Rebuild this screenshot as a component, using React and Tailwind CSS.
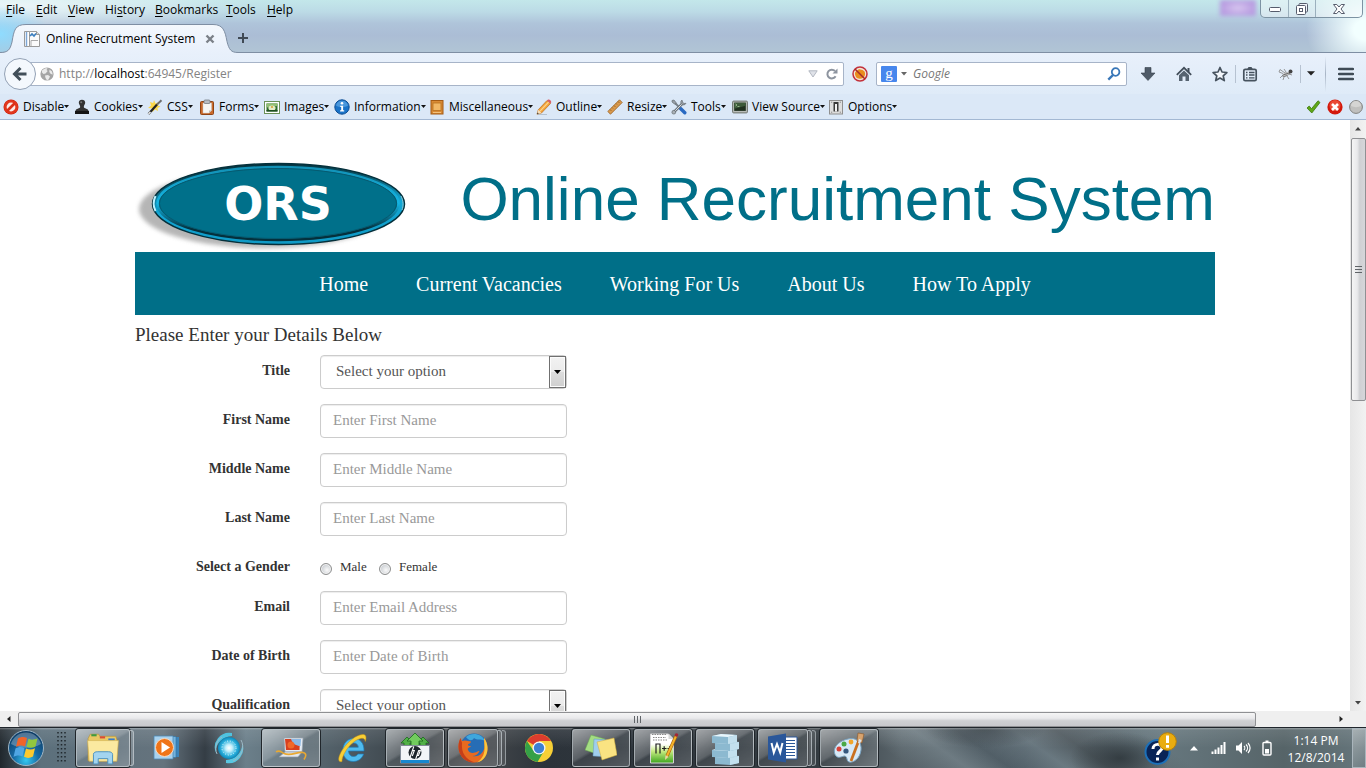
import React from "react";

/* ---------- toolbar icons ---------- */

function Svg({ s = 16, vb = 16, children }) {
  return (
    <svg className="block shrink-0" width={s} height={s} viewBox={`0 0 ${vb} ${vb}`} fill="none" aria-hidden="true">
      {children}
    </svg>
  );
}

const IconDisable = () => (
  <Svg>
    <circle cx="8" cy="8" r="7.500" fill="#c9200c" />
    <circle cx="8" cy="8" r="7" fill="#e2371d" />
    <circle cx="8" cy="8" r="4.400" fill="#fbeae6" />
    <path d="M4 12 12 4" stroke="#dd3017" strokeWidth="2.600" />
  </Svg>
);
const IconCookies = () => (
  <Svg>
    <path d="M8 .8c2 0 3.200 1.300 3.200 3 0 1.600-1.400 2.400-1.400 4.200 0 1.600 4.700 1.600 4.700 4H1.500c0-2.400 4.700-2.400 4.700-4 0-1.800-1.400-2.600-1.400-4.200 0-1.700 1.200-3 3.200-3z" fill="#333" />
    <path d="M1 12h14v3H1z" fill="#151515" />
    <circle cx="7.200" cy="3.200" r="1" fill="#777" />
  </Svg>
);
const IconCss = () => (
  <Svg>
    <path d="m7 1 1.500 3.500L12 3l-1 3.500 2.500 1L10.500 9l.5 3-3-1.500L5.500 13 5 9.500 1 9l3-2.500L3 3l3.200 1z" fill="#fbd84a" />
    <path d="M1.500 15 10 5.500" stroke="#222" strokeWidth="2.200" />
    <path d="m10 5.500 4.500-4.300" stroke="#6d6d6d" strokeWidth="2" />
    <path d="m1.500 15 2-2.200" stroke="#ddd" strokeWidth="1.800" />
  </Svg>
);
const IconForms = () => (
  <Svg>
    <rect x="1.500" y="2.500" width="13" height="13" rx="1" fill="#c96a2c" stroke="#8f4416" />
    <path d="M4 4h8.500v7.500L10 14H4z" fill="#f7f7f5" stroke="#c9c9c9" strokeWidth=".5" />
    <path d="M12.500 11.500H10V14z" fill="#bdbdbd" />
    <rect x="5" y="1" width="6" height="3.500" rx="1" fill="#b9bec4" stroke="#6c7177" strokeWidth=".7" />
  </Svg>
);
const IconImages = () => (
  <Svg>
    <rect x=".5" y="2.500" width="15" height="12" fill="#fff" stroke="#6b9158" />
    <rect x="2.500" y="4.500" width="11" height="8" fill="#2f6d2c" />
    <path d="M2.500 4.500h11v2.500l-11 1.500z" fill="#92bf74" />
    <ellipse cx="8" cy="9" rx="3.600" ry="2.500" fill="#e4ecc8" />
    <circle cx="8" cy="8" r="1.100" fill="#d6a335" />
    <path d="M2.500 11h11v1.500h-11z" fill="#1f4f20" />
  </Svg>
);
const IconInfo = () => (
  <Svg>
    <circle cx="8" cy="8" r="7.200" fill="#1a73c8" stroke="#0d4d93" />
    <path d="M2 6.500a6.200 6.200 0 0 1 12 0c-3 2-9 2-12 0z" fill="#4a97dc" />
    <circle cx="8" cy="4.200" r="1.300" fill="#fff" />
    <path d="M6.300 6.800h2.800v4.400h1.100v1.300H6.100v-1.300h1.100V8H6.300z" fill="#fff" />
  </Svg>
);
const IconMisc = () => (
  <Svg>
    <rect x="2" y="1.500" width="12" height="13.500" fill="#d98b35" stroke="#a45b14" />
    <rect x="4" y="4" width="8" height="7.500" fill="#f1b765" stroke="#b8701f" strokeWidth=".8" />
    <path d="M4 13.500h8" stroke="#f3c27c" />
  </Svg>
);
const IconPencil = () => (
  <Svg>
    <path d="m1 15.200 1.300-4.500L11 1.500l3.500 3L5.500 14z" fill="#f3a33a" stroke="#b96a18" strokeWidth=".7" />
    <path d="m4 12.200 8.700-9.200" stroke="#fcd48b" strokeWidth="1.200" />
    <path d="m11 1.500 1-.9c1.500-.6 3.600 1.200 3.200 2.800l-.9 1z" fill="#d9606a" />
    <path d="m1 15.200 1.300-4.500 3.200 3.300z" fill="#f5dfbd" />
    <path d="m1 15.200.6-1.800 1.200 1.200z" fill="#222" />
    <path d="M2 15.500h9" stroke="#9aa7b5" strokeWidth=".6" />
  </Svg>
);
const IconRuler = () => (
  <Svg>
    <path d="M.8 12.500 12.500.8l2.700 2.700L3.500 15.200z" fill="#d99a4e" stroke="#995f1f" strokeWidth=".8" />
    <path d="m3 10.500 1.400 1.400M5 8.500l1 1M7 6.500l1.400 1.400M9 4.500l1 1M11 2.500l1.400 1.400" stroke="#8a5a1c" strokeWidth=".8" />
  </Svg>
);
const IconTools = () => (
  <Svg>
    <path d="m4 4 6 6" stroke="#7a828a" strokeWidth="2" />
    <path d="m9.500 9.500 4.300 4.300" stroke="#2a6ac2" strokeWidth="3.400" strokeLinecap="round" />
    <path d="m2 14 10-10" stroke="#6f767d" strokeWidth="2.600" />
    <path d="m2 14 10-10" stroke="#d8dde1" strokeWidth="1" />
    <path d="M11 1c-1.600 1-1.600 3.200-.3 4.300 1.300 1 3.500.8 4.300-1l-2.200.2L11.600 3zM1 1.500 3 1l2 2.500-.2 1.600-1.500-.2L1 3z" fill="#9aa1a8" stroke="#5b6167" strokeWidth=".6" />
    <circle cx="2.800" cy="13.200" r="1.900" fill="#aab1b7" stroke="#5b6167" strokeWidth=".6" />
  </Svg>
);
const IconTerminal = () => (
  <Svg>
    <rect x=".6" y="2.100" width="14.800" height="11.800" rx="1" fill="#b9bdb9" stroke="#6d736d" />
    <rect x="2.200" y="3.700" width="11.600" height="8.200" fill="#20301f" />
    <path d="M2.200 3.700h11.600v3l-11.600 3z" fill="#3d5a3a" />
    <path d="m3.500 5 1.500 1-1.500 1M5.500 7.500h2" stroke="#b8dca8" strokeWidth=".7" />
  </Svg>
);
const IconOptions = () => (
  <Svg>
    <rect x="1.500" y="1.500" width="13" height="13.500" fill="#dedede" stroke="#8f8f8f" />
    <path d="M5.500 3h5v9.500h-5z" fill="#3a3a3a" />
    <path d="M7 5h2v7.500H7z" fill="#f3f3f3" />
    <path d="M3.200 13.200h1M11.800 13.200h1M3.200 3.200h1M11.800 3.200h1" stroke="#777" />
  </Svg>
);

const devItems = [
  { label: "Disable", w: "w-[71px]", icon: <IconDisable /> },
  { label: "Cookies", w: "w-[73px]", icon: <IconCookies /> },
  { label: "CSS", w: "w-[52px]", icon: <IconCss /> },
  { label: "Forms", w: "w-[65px]", icon: <IconForms /> },
  { label: "Images", w: "w-[70px]", icon: <IconImages /> },
  { label: "Information", w: "w-[95px]", icon: <IconInfo /> },
  { label: "Miscellaneous", w: "w-[107px]", icon: <IconMisc /> },
  { label: "Outline", w: "w-[71px]", icon: <IconPencil /> },
  { label: "Resize", w: "w-[64px]", icon: <IconRuler /> },
  { label: "Tools", w: "w-[61px]", icon: <IconTools /> },
  { label: "View Source", w: "w-[96px]", icon: <IconTerminal /> },
  { label: "Options", w: "w-[70px]", icon: <IconOptions /> },
];

const menus = [
  ["F", "ile", "w-[30px]", ""],
  ["E", "dit", "w-[32px]", ""],
  ["V", "iew", "w-[37px]", ""],
  ["s", "tory", "w-[50px]", "Hi"],
  ["B", "ookmarks", "w-[71px]", ""],
  ["T", "ools", "w-[41px]", ""],
  ["H", "elp", "w-[40px]", ""],
];

/* ---------- browser chrome ---------- */

function TitleArea() {
  return (
    <div className="relative bg-[radial-gradient(ellipse_50px_30px_at_0px_34px,#8fdcff_0%,transparent_100%),radial-gradient(ellipse_240px_26px_at_10px_6px,#ffffffb0_0%,transparent_100%),radial-gradient(ellipse_60px_50px_at_100%_30px,#f2ffff_20%,transparent_100%),linear-gradient(180deg,#c3e7ea_0%,#bcdbe6_22%,#afc4da_44%,#abbdd5_66%,#b1c5d5_100%)]">
      <div className="flex h-6 items-start justify-between">
        <nav className="flex h-5 items-center pl-[6px] text-[12px] leading-5 text-black">
          {menus.map(([key, rest, w, pre]) => (
            <button key={key + rest} className={`${w} h-5 whitespace-nowrap text-left`}>
              {pre}
              <span className="underline underline-offset-2">{key}</span>
              {rest}
            </button>
          ))}
        </nav>
        <div className="flex pr-[3px]">
          <div className="mr-1 h-[16px] w-[36px] bg-[#b79fe0] bg-[radial-gradient(ellipse_at_center,#d8c8f0_0%,#b79be0_70%)] blur-[2px]" />
          <div className="flex h-[18px] overflow-hidden rounded-b-[5px] border border-t-0 border-[#7d93a3] bg-[#ffffff70]">
            <button aria-label="Minimize" className="flex w-[28px] items-center justify-center border-r border-[#9bb0bd]">
              <svg width="14" height="8" viewBox="0 0 14 8" aria-hidden="true"><rect x="1.500" y="2.500" width="11" height="4" rx="1" fill="#fff" stroke="#565c6c" /></svg>
            </button>
            <button aria-label="Restore" className="flex w-[27px] items-center justify-center border-r border-[#9bb0bd]">
              <svg width="14" height="14" viewBox="0 0 14 14" aria-hidden="true">
                <rect x="4" y="1.500" width="8.500" height="8.500" rx="1" fill="#eef3f8" stroke="#565c6c" />
                <rect x="1.500" y="3.500" width="9" height="9" rx="1" fill="#fff" stroke="#565c6c" />
                <rect x="4.500" y="6.500" width="3" height="3" fill="#fff" stroke="#565c6c" />
              </svg>
            </button>
            <button aria-label="Close window" className="flex w-[46px] items-center justify-center">
              <svg width="14" height="12" viewBox="0 0 14 12" aria-hidden="true">
                <path d="M1.500 1.500h3.300L7 4l2.200-2.500h3.300L9 6l3.500 4.500H9.200L7 8l-2.200 2.500H1.500L5 6z" fill="#fff" stroke="#565c6c" strokeLinejoin="round" />
              </svg>
            </button>
          </div>
        </div>
      </div>
      <div className="flex h-[29px] items-center border-b border-[#7e8ea3]">
        <div className="relative -mb-px h-[29px] w-[240px]">
          <svg className="absolute inset-0" width="240" height="29" viewBox="0 0 240 29" aria-hidden="true">
            <defs>
              <linearGradient id="tab" x1="0" y1="0" x2="0" y2="1">
                <stop offset="0" stopColor="#f4f8fd" />
                <stop offset="1" stopColor="#e8f0fb" />
              </linearGradient>
            </defs>
            <path d="M0 29v-.5C8 28.500 10 26 12 18 14 6 15 .5 26 .5h187c10 0 12 6 14 17 2 8 4 11 11 11h2v.5z" fill="url(#tab)" />
            <path d="M0 28.500C8 28.500 10 26 12 18 14 6 15 .5 26 .5h187c10 0 12 6 14 17 2 8 4 11 11 11h2" fill="none" stroke="#7e8ea3" />
          </svg>
          <div className="relative flex h-[29px] items-center pl-6">
            <svg width="17" height="16" viewBox="0 0 17 16" aria-hidden="true">
              <path d="M.5.5h5v15h-5z" fill="#fff" stroke="#9a9a9a" />
              <path d="M2.500 1v14" stroke="#7da7d6" strokeWidth="1.500" />
              <path d="M5.500.5h7l3 3v12h-10z" fill="#fbfbfb" stroke="#9a9a9a" />
              <path d="M12.500.5v3h3" fill="#ddd" stroke="#9a9a9a" />
              <path d="m6 5 2-2 2 2 2-2.500" stroke="#3b7fc0" strokeWidth="1.600" fill="none" />
              <path d="M7 9.500h7M7 15V9.500" stroke="#aaa" fill="none" />
            </svg>
            <span className="w-[156px] whitespace-nowrap pl-[5px] text-[12px] leading-5 text-black">Online Recrutment System</span>
            <button aria-label="Close tab" className="ml-2">
              <svg width="10" height="10" viewBox="0 0 10 10" aria-hidden="true"><path d="m1.500 1.500 7 7M8.500 1.500l-7 7" stroke="#7b8088" strokeWidth="2.400" /></svg>
            </button>
          </div>
        </div>
        <button aria-label="New tab" className="-ml-[3px]">
          <svg width="12" height="12" viewBox="0 0 12 12" aria-hidden="true"><path d="M6 1v10M1 6h10" stroke="#3f4954" strokeWidth="2" /></svg>
        </button>
      </div>
    </div>
  );
}

function NavBar() {
  return (
    <div className="flex h-[41px] items-center bg-[linear-gradient(180deg,#e8f0fb,#dfebf8)] text-[12px]">
      <div className="flex min-w-0 flex-1 items-center pl-1">
        <button aria-label="Back" className="relative z-10 flex size-8 shrink-0 items-center justify-center rounded-full border border-[#93a1b5] bg-[#f4f8fd]">
          <svg width="16" height="16" viewBox="0 0 16 16" aria-hidden="true">
            <path d="M8.500 2 2.500 8l6 6M3 8h11.500" stroke="#424f5a" strokeWidth="3" fill="none" />
          </svg>
        </button>
        <div className="-ml-[6px] flex h-6 min-w-0 flex-1 items-center rounded-r-[2px] border border-[#a7b4c8] bg-white pl-[9px] pr-[5px]">
          <svg width="14" height="14" viewBox="0 0 14 14" aria-hidden="true">
            <circle cx="7" cy="7" r="6.600" fill="#a5a5a5" />
            <path d="M2 3.500C4 1.500 6 1 7.500 1.200L6.500 3l1.200 1L5.500 6.500l-2 .5L2 5.500zM5 8.500l3-.5 2 1.500-1.500 3-1.500.8L5.500 11zM9.500 2.500l2.500 2 .8 3-2-.5-1.500-2z" fill="#eaeaea" />
          </svg>
          <p className="min-w-0 flex-1 truncate pl-[5px] text-[#838383]">
            http://<span className="text-black">localhost</span>:64945/Register
          </p>
          <button aria-label="Show history" className="mr-2">
            <svg width="10" height="8" viewBox="0 0 10 8" aria-hidden="true"><path d="M.8.8h8.400L5 7z" fill="#dfe2e8" stroke="#b3b8c2" /></svg>
          </button>
          <button aria-label="Reload">
            <svg width="12" height="12" viewBox="0 0 12 12" aria-hidden="true">
              <path d="M9.600 8.300A4.400 4.400 0 1 1 9 3" fill="none" stroke="#8d949f" strokeWidth="2" />
              <path d="M11.500.5v5H6.500z" fill="#8d949f" />
            </svg>
          </button>
        </div>
      </div>
      <button aria-label="Add-on blocker" className="mx-2">
        <Svg>
          <circle cx="8" cy="8" r="6.500" fill="#f3e3d6" />
          <path d="M3 7c1-3 3-2 4-4 1 1 3 0 5 2s1 6-1 7-6 1-7-1-1-2-1-4z" fill="#e98d1d" />
          <circle cx="8" cy="8" r="7" stroke="#c3303a" strokeWidth="1.500" />
          <path d="m3 3 10 10" stroke="#a82b2b" strokeWidth="1.500" />
        </Svg>
      </button>
      <div className="flex h-6 w-[251px] items-center rounded-[2px] border border-[#a7b4c8] bg-white pl-1 pr-[5px]">
        <svg className="shrink-0" width="16" height="16" viewBox="0 0 16 16" aria-hidden="true">
          <rect width="16" height="16" rx="1" fill="#4787ed" />
          <text x="8" y="11.500" textAnchor="middle" fontFamily="Liberation Serif, serif" fontSize="15" fill="#fff">g</text>
        </svg>
        <svg className="ml-1 shrink-0" width="6" height="4" viewBox="0 0 6 4" aria-hidden="true"><path d="M0 0h6L3 3.500z" fill="#666" /></svg>
        <input aria-label="Search" placeholder="Google" className="ml-[6px] min-w-0 flex-1 bg-transparent italic outline-none placeholder:text-[#777]" />
        <button aria-label="Go">
          <svg width="14" height="14" viewBox="0 0 14 14" aria-hidden="true">
            <circle cx="8.600" cy="5" r="3.800" fill="none" stroke="#3977b8" strokeWidth="1.800" />
            <path d="m6 8-4.700 4.700" stroke="#3977b8" strokeWidth="2.400" />
          </svg>
        </button>
      </div>
      <div className="flex h-[40px] items-center pl-[13px]">
        <button aria-label="Downloads" className="mr-5">
          <Svg><path d="M5 1.500h6V7h4l-7 7.500L1 7h4z" fill="#4f5b68" stroke="#36414c" strokeWidth=".6" /></Svg>
        </button>
        <button aria-label="Home" className="mr-5">
          <Svg>
            <path d="m.8 8.800 7.200-7 7.200 7" stroke="#424e5a" strokeWidth="1.800" />
            <path d="M11.500 2h2v4h-2z" fill="#424e5a" />
            <path d="M8 4.500 13 9.300V15H9.500v-4.500h-3V15H3V9.300z" fill="#566370" />
          </Svg>
        </button>
        <button aria-label="Bookmark this page" className="mr-[7px]">
          <Svg><path d="m8 1.500 2 4.500 4.900.5-3.700 3.300 1.100 4.800L8 12.100l-4.300 2.500 1.100-4.800L1.100 6.500 6 6z" stroke="#46525e" strokeWidth="1.700" strokeLinejoin="round" fill="#f2f6fb" /></Svg>
        </button>
        <span className="h-[18px] w-px bg-[#b6c2d1]" />
        <button aria-label="Bookmarks list" className="ml-[6px] mr-5">
          <Svg>
            <rect x="1.800" y="3.300" width="12.400" height="11.400" rx="1.500" stroke="#46525e" strokeWidth="1.700" />
            <path d="M5 3.500 6.500 1h3L11 3.500z" fill="#46525e" />
            <path d="M4 6.500h1.500M7 6.500h5.500M4 9h1.500M7 9h5.500M4 11.800h1.500M7 11.800h5.500" stroke="#46525e" strokeWidth="1.300" />
          </Svg>
        </button>
        <button aria-label="Firebug" className="mr-[6px]">
          <Svg>
            <path d="M4 9.500c2-3 5-4 7.500-3.500l.5 2c-2 1.500-4 3-7 3z" fill="#707070" />
            <path d="m7 7-5-3.500L1 6l4 1.500M8 6 6 3M11 8l3 1M9 10l2 3M6 11l-1 3M4 10l-2 2" stroke="#8d8d8d" strokeWidth=".9" />
            <circle cx="12.500" cy="5.500" r="2" fill="#444" />
            <path d="m5 8 6-2M5 10l6-2" stroke="#ddd" strokeWidth=".7" />
          </Svg>
        </button>
        <span className="h-[18px] w-px bg-[#b6c2d1]" />
        <button aria-label="More" className="mx-[6px]">
          <svg width="8" height="5" viewBox="0 0 8 5" aria-hidden="true"><path d="M0 .3h8L4 4.500z" fill="#222" /></svg>
        </button>
        <span className="ml-[4px] h-[36px] w-px bg-[linear-gradient(180deg,transparent,#a7b4c5,transparent)]" />
        <button aria-label="Open menu" className="mx-3">
          <Svg><path d="M1 3h14M1 8h14M1 13h14" stroke="#3f4b56" strokeWidth="2.400" strokeLinecap="round" /></Svg>
        </button>
      </div>
    </div>
  );
}

function DevToolbar() {
  return (
    <div className="flex h-[26px] items-center border-b border-[#a3b8d3] bg-[#dbe8f7] pl-[3px] pr-[3px] text-[12px] text-black">
      {devItems.map((it) => (
        <button key={it.label} className={`${it.w} flex shrink-0 items-center gap-1 whitespace-nowrap`}>
          {it.icon}
          <span className="flex items-center">
            {it.label}
            <svg width="5" height="3" viewBox="0 0 5 3" aria-hidden="true"><path d="M0 0h5L2.500 3z" fill="#111" /></svg>
          </span>
        </button>
      ))}
      <div className="ml-auto flex items-center gap-[6px]">
        <Svg>
          <path d="m2 9 2.200-2 2.300 2.700L13 1.800 15 3.500 6.800 14z" fill="#5fa718" stroke="#3c7a0b" strokeWidth=".8" />
        </Svg>
        <Svg>
          <circle cx="8" cy="8" r="7.600" fill="#d3180b" />
          <circle cx="8" cy="6.500" r="5.500" fill="#ea4a35" />
          <path d="m5 5 6 6M11 5l-6 6" stroke="#fff" strokeWidth="2.600" />
        </Svg>
        <svg width="14" height="14" viewBox="0 0 14 14" aria-hidden="true">
          <circle cx="7" cy="7" r="6.400" fill="#c0c0be" stroke="#80807e" />
          <path d="M2 6a5 5 0 0 1 10 0c-3 1.500-7 1.500-10 0z" fill="#d5d5d3" />
        </svg>
      </div>
    </div>
  );
}

/* ---------- page content ---------- */

function OrsLogo() {
  return (
    <svg width="272" height="92" viewBox="0 0 272 92" role="img" aria-label="ORS">
      <defs>
        <filter id="soft" x="-10%" y="-10%" width="120%" height="120%"><feGaussianBlur stdDeviation="2" /></filter>
        <linearGradient id="rim" x1="0" y1="0" x2=".15" y2="1">
          <stop offset="0" stopColor="#03262f" />
          <stop offset=".3" stopColor="#0a5b70" />
          <stop offset=".6" stopColor="#12a8d6" />
          <stop offset="1" stopColor="#0f9ac6" />
        </linearGradient>
        <linearGradient id="rim2" x1="0" y1="0" x2="0" y2="1">
          <stop offset="0" stopColor="#1291b6" />
          <stop offset=".5" stopColor="#14b4e2" />
          <stop offset=".85" stopColor="#04303c" />
        </linearGradient>
      </defs>
      <ellipse cx="130" cy="49" rx="126" ry="39" fill="#9d9d9d" opacity=".75" filter="url(#soft)" />
      <ellipse cx="143.500" cy="44" rx="126" ry="40.500" fill="url(#rim)" stroke="#05303b" strokeWidth="1.500" />
      <ellipse cx="143" cy="43.500" rx="120.500" ry="36.500" fill="#00708a" stroke="url(#rim2)" strokeWidth="2.500" />
      <ellipse cx="143" cy="43.500" rx="118.500" ry="35" fill="#00708a" stroke="#065a70" strokeWidth="1" />
      <path d="M20.500 36c-2.500 5-2.500 10 0 15" stroke="#bff2ff" strokeWidth="2" fill="none" />
      <path d="M266 36c2.500 5 2.500 10 1 14" stroke="#8cc4d2" strokeWidth="1" fill="none" />
      <text x="143" y="60" textAnchor="middle" fill="#fff" fontFamily="DejaVu Sans, sans-serif" fontWeight="700" fontSize="46">ORS</text>
    </svg>
  );
}

const fieldBox =
  "h-[34px] w-full rounded border border-[#ccc] bg-white pb-[2px] text-[15px] text-[#555] shadow-[inset_0_1px_1px_rgba(0,0,0,0.075)] outline-none";

function Row({ id, label, children }) {
  return (
    <div className="flex gap-[30px]">
      <label htmlFor={id} className="w-[155px] pt-[6px] text-right text-[14px] font-bold leading-5">{label}</label>
      <div className="w-[247px]">{children}</div>
    </div>
  );
}

function TextField({ id, label, placeholder }) {
  return (
    <Row id={id} label={label}>
      <input id={id} type="text" placeholder={placeholder} className={`${fieldBox} px-3 placeholder:text-[#999]`} />
    </Row>
  );
}

function SelectField({ id, label }) {
  return (
    <Row id={id} label={label}>
      <div className="relative">
        <select id={id} className={`${fieldBox} appearance-none pl-[15px] pr-6`}>
          <option>Select your option</option>
        </select>
        <span className="pointer-events-none absolute right-px top-px flex h-8 w-[17px] items-center justify-center border border-[#707070] bg-[linear-gradient(180deg,#f2f2f2_0%,#ebebeb_50%,#dddddd_50%,#cfcfcf_100%)] shadow-[inset_0_0_0_1px_#fcfcfc]">
          <svg width="7" height="4" viewBox="0 0 7 4" aria-hidden="true"><path d="M0 0h7L3.500 4z" fill="#000" /></svg>
        </span>
      </div>
    </Row>
  );
}

const radio =
  "mt-1 size-3 appearance-none rounded-full border border-[#8e8f8f] bg-[radial-gradient(circle_at_60%_60%,#fafafa_0%,#c9cdd2_70%)] shadow-[inset_0_0_0_1px_#f4f4f4]";

function Page() {
  return (
    <main className="min-w-0 flex-1 overflow-hidden bg-white font-['Liberation_Serif',serif] text-[#333]">
      <div className="mx-auto w-4/5">
        <header className="flex h-[132px] items-start justify-between pt-10">
          <OrsLogo />
          <h1 className="whitespace-nowrap pt-1 font-['Liberation_Sans',sans-serif] text-[62px] leading-[70px] text-[#006f88]">
            Online Recruitment System
          </h1>
        </header>
        <nav className="flex h-[63px] items-center justify-center gap-12 bg-[#006f88] text-[20px] text-white">
          <a href="#home">Home</a>
          <a href="#vacancies">Current Vacancies</a>
          <a href="#working">Working For Us</a>
          <a href="#about">About Us</a>
          <a href="#apply">How To Apply</a>
        </nav>
        <h2 className="pb-2 pt-2 text-[19px] leading-6">Please Enter your Details Below</h2>
        <form className="flex flex-col gap-[15px]">
          <SelectField id="title" label="Title" />
          <TextField id="first" label="First Name" placeholder="Enter First Name" />
          <TextField id="middle" label="Middle Name" placeholder="Enter Middle Name" />
          <TextField id="last" label="Last Name" placeholder="Enter Last Name" />
          <fieldset className="flex h-[25px] items-center gap-[30px]">
            <legend className="float-left w-[155px] pt-[6px] text-right text-[14px] font-bold leading-5">Select a Gender</legend>
            <div className="flex pt-[6px] text-[13px] leading-5">
              <span className="flex w-[59px] items-center gap-2">
                <input id="male" name="gender" type="radio" className={radio} />
                <label htmlFor="male">Male</label>
              </span>
              <span className="flex items-center gap-2">
                <input id="female" name="gender" type="radio" className={radio} />
                <label htmlFor="female">Female</label>
              </span>
            </div>
          </fieldset>
          <TextField id="email" label="Email" placeholder="Enter Email Address" />
          <TextField id="dob" label="Date of Birth" placeholder="Enter Date of Birth" />
          <SelectField id="qualification" label="Qualification" />
        </form>
      </div>
    </main>
  );
}

function VerticalScroll() {
  return (
    <div className="flex w-4 shrink-0 flex-col items-center bg-[linear-gradient(90deg,#e6e6e6,#f2f2f2)]">
      <div className="flex h-[18px] items-center">
        <svg width="6" height="4" viewBox="0 0 6 4" aria-hidden="true"><path d="M3 0 6 3.500H0z" fill="#444" /></svg>
      </div>
      <div className="flex h-[263px] w-[15px] items-center justify-center rounded-[2px] border border-[#8f9093] bg-[linear-gradient(90deg,#f5f5f5_0%,#e9e9eb_40%,#cfd0d3_60%,#d6d6da_100%)]">
        <svg width="7" height="9" viewBox="0 0 7 9" aria-hidden="true"><path d="M0 1.500h7M0 4.500h7M0 7.500h7" stroke="#606468" /></svg>
      </div>
      <div className="mt-auto flex h-4 items-center">
        <svg width="6" height="4" viewBox="0 0 6 4" aria-hidden="true"><path d="M0 0h6L3 3.500z" fill="#444" /></svg>
      </div>
    </div>
  );
}

function HorizontalScroll() {
  return (
    <div className="flex h-4 shrink-0 items-center bg-[#efefef] pr-4">
      <div className="flex w-[18px] justify-center">
        <svg width="4" height="6" viewBox="0 0 4 6" aria-hidden="true"><path d="M3.500 0v6L0 3z" fill="#222" /></svg>
      </div>
      <div className="flex h-[15px] min-w-0 flex-1 items-center justify-center rounded-[2px] border border-[#8f9093] bg-[linear-gradient(180deg,#f5f5f5_0%,#e9e9eb_40%,#cfd0d3_60%,#c8c8cc_100%)]">
        <svg width="9" height="7" viewBox="0 0 9 7" aria-hidden="true"><path d="M1.500 0v7M4.500 0v7M7.500 0v7" stroke="#606468" /></svg>
      </div>
      <div className="flex w-[94px] justify-end pr-[7px]">
        <svg width="4" height="6" viewBox="0 0 4 6" aria-hidden="true"><path d="M.5 0v6L4 3z" fill="#222" /></svg>
      </div>
    </div>
  );
}

/* ---------- taskbar ---------- */

const Explorer = () => (
  <Svg s={34} vb={32}>
    <path d="M2 7 4 3h8l1 2h15l1 3v20H2z" fill="#e8c865" stroke="#b6933a" strokeWidth=".6" />
    <path d="M5 3h5v2H5z" fill="#3f9a41" /><path d="M13 5h5v2h-5z" fill="#d94b39" /><path d="M21 7h6v2h-6z" fill="#3a7bc8" />
    <path d="M1.500 9h29L29 28.500H3z" fill="#fbe9a0" stroke="#d2b152" strokeWidth=".6" />
    <path d="M7 31v-9c0-2 2-2.500 4-2.500h10c2.500 0 4 1 4 2.500v9h-4.500v-5h-9v5z" fill="#a3d4ef" stroke="#4c90bd" strokeWidth=".9" />
  </Svg>
);
const MediaPlayer = () => (
  <Svg s={28} vb={28}>
    <path d="M12 3h14v20H12z" fill="#3b83b9" /><path d="M8 2.500h15v21H8z" fill="#74b3dd" stroke="#2f6f9d" strokeWidth=".6" />
    <path d="M1 2h19v23H1z" fill="#a9d2ee" stroke="#4b88b4" strokeWidth=".8" />
    <circle cx="11.500" cy="13.500" r="9" fill="#ef7418" stroke="#f8d8be" strokeWidth="1" />
    <path d="m8.500 8 8.500 5.500L8.500 19z" fill="#fff" />
  </Svg>
);
const Orb = () => (
  <Svg s={32} vb={32}>
    <defs><radialGradient id="orb"><stop offset="0" stopColor="#fff" /><stop offset=".3" stopColor="#c3effb" /><stop offset=".7" stopColor="#2fb3de" /><stop offset="1" stopColor="#0c86b8" /></radialGradient></defs>
    <path d="M19 1A14.500 14.500 0 0 0 3 21c-1-8 5-16 16-17z" fill="#4fc3e0" />
    <path d="M13 31a14.500 14.500 0 0 0 16-20c1 8-5 16-16 17z" fill="#59c7e2" />
    <path d="M28 8c4 7 1 17-8 21M4 22C1 15 4 8 9 5" stroke="#9fb8c4" strokeWidth="1" />
    <circle cx="16" cy="16" r="11" fill="url(#orb)" />
    <circle cx="16" cy="16" r="7" stroke="#e9fbff" strokeWidth="1" strokeDasharray="1 1.800" />
  </Svg>
);
const Laptop = () => (
  <Svg s={32} vb={32}>
    <path d="M9 6h19l-1 14H10z" fill="#e5ebf2" stroke="#98a3b0" strokeWidth=".7" />
    <path d="M10 7h15l-.5 11H11z" fill="#d8401f" /><path d="M16 7h10l-.5 7c-4 0-8-2-9.500-7z" fill="#8bb8e4" />
    <circle cx="16" cy="13" r="3.500" fill="#f0682a" />
    <path d="M10 20h17l-4 5H4z" fill="#e3e8ed" stroke="#8d97a4" strokeWidth=".7" />
    <path d="M1 20c3-2.500 5 0 8 1.500 7 3 13-2 19-1 4 1 3 4 1 7" stroke="#e8a832" strokeWidth="1.600" />
  </Svg>
);
const Explorer2 = () => (
  <Svg s={32} vb={32}>
    <path d="M27 19H11.500c.2 3.500 2.200 5.500 5 5.500 2.200 0 3.600-.9 4.400-2.500h5.700c-1.600 4.600-5.400 7.500-10.300 7.500C10 29.500 5.800 25 5.800 18.500S10 6.500 16.500 6.500 27.300 11 27 19zm-5.700-3.800c-.3-2.800-2.200-4.300-4.800-4.300-2.500 0-4.300 1.500-4.800 4.300z" fill="#4fbbee" stroke="#1c7cb9" strokeWidth=".7" />
    <path d="M5 29.500C0 31 1 24 6 17 11 9.500 19 3 25.500 2.500c3.500-.2 4.300 2.500 2.800 7-.3-2.500-1.800-3.700-4.800-3-5 1.200-11 6.500-14.500 12-3 5-4.300 8.500-4 11z" fill="#f9cf35" stroke="#c89413" strokeWidth=".5" />
  </Svg>
);
const HpIcon = () => (
  <Svg s={34} vb={34}>
    <path d="m9 6 6 6h-3v5H6v-5H3zM25 6l6 6h-3v5h-6v-5h-3z" fill="#52b148" stroke="#1c6a1e" strokeWidth=".8" />
    <path d="m17 2 8 8h-4v7h-8v-7H9z" fill="#72cc5e" stroke="#1c6a1e" strokeWidth=".8" />
    <path d="M2.500 14.500h29V32h-29z" fill="#f2f5f8" stroke="#828c98" /><path d="M3 29h28v3H3z" fill="#1888cf" />
    <circle cx="17" cy="21.500" r="6.500" fill="#1d252c" />
    <path d="m15.800 15.500-3.800 11M14.300 19.500h2l-2 5.500M17.700 28l3-8.500h1.600l-1.800 5h-1.700" stroke="#fff" strokeWidth="1.100" />
  </Svg>
);
const Firefox = () => (
  <Svg s={32} vb={32}>
    <circle cx="17" cy="15" r="13.500" fill="#276db5" /><path d="M9 5c5-5 16-4 19 4-4-3-8 0-11-3-2 4-6 2-8-1z" fill="#3fa7dd" />
    <path d="M27 6c4 5 5 13 1 19-5 7-15 7-21 2C1 22 0 13 3.500 6c.5 1.500 1 2.500 1.800 3C7 8 9.500 8.500 11 9l3 .5c0 1-1 2-2.500 2.500-1 .5-.5 1.500.5 2h2c-1 2-4 1.500-3 4 1 2.500 4 3.500 7 2.500 2-.5 3-2 4.500-1.500-1.500 3.500-4 5-7 5 7 1.500 12-4 12-10 0-3-.5-5.500-.5-8z" fill="#e86a20" />
    <path d="M27 6c4 5 5 13 1 19-2 3-5 5-8 5.500 6-4 8-9.500 7.500-16.500z" fill="#fbc63a" />
    <path d="M3.500 6C0 13 1 22 7 27c3 2.500 7 4 11 3.500C9 28 4 21 5 11z" fill="#c63f19" />
  </Svg>
);
const Chrome = () => (
  <Svg s={30} vb={30}>
    <circle cx="15" cy="15" r="14" fill="#f7cf36" />
    <path d="M15 15 2.900 8A14 14 0 0 1 27.100 8H15z" fill="#dc3c2d" />
    <path d="M2.900 8A14 14 0 0 0 13.500 29l6.500-11-5-3-6 2z" fill="#34a047" />
    <circle cx="15" cy="15" r="6.500" fill="#f4f6f8" /><circle cx="15" cy="15" r="5.200" fill="#3d7fd2" />
  </Svg>
);
const Notes = () => (
  <Svg s={32} vb={32}>
    <path d="m6 3 14 4-5 16L0 18z" fill="#a4dd83" stroke="#69a94e" strokeWidth=".5" />
    <path d="m9 7 15 1-1 17-15-1z" fill="#a0ceed" stroke="#6297bf" strokeWidth=".5" />
    <path d="m12 10 17-4 3 17-15 5z" fill="#fae382" stroke="#cfaa3b" strokeWidth=".5" />
  </Svg>
);
const Npp = () => (
  <Svg s={34} vb={34}>
    <defs><linearGradient id="npp" x1="0" y1="0" x2="0" y2="1"><stop offset=".35" stopColor="#fff" /><stop offset=".6" stopColor="#c4ea80" /><stop offset="1" stopColor="#3da51d" /></linearGradient></defs>
    <path d="M4.500 3h18l5 5v24h-23z" fill="url(#npp)" stroke="#d4d4d4" />
    <path d="M22.500 3v5h5z" fill="#d8d8d8" />
    <path d="M6 3.500h15M7 6.500h13M7 9h14" stroke="#8a8a8a" strokeWidth="1" strokeDasharray="1.500 1" />
    <path d="M10 22.500V13h1.500M11.500 13H14v9.500M16 17.500h4.500M18.200 15.200v4.600M21.500 17.500H26M23.700 15.200v4.600" stroke="#202020" strokeWidth="1.200" />
    <path d="M30 5 21 25" stroke="#a55d11" strokeWidth="3.200" /><path d="M30 5 21 25" stroke="#f4b42a" strokeWidth="2" />
    <path d="m19.500 24.300 3 1.400-3.500 3.300z" fill="#eed3a2" /><circle cx="30.500" cy="4" r="1.800" fill="#a32937" />
  </Svg>
);
const Servers = () => (
  <Svg s={34} vb={34}>
    {[24, 17, 10, 3].map((y, i) => (
      <g key={y}>
        <path d={i % 2 ? `M4 ${y + 2} 13 ${y}l16 1v7l-9 2-16-1z` : `M7 ${y + 2} 16 ${y}l15 1v7l-9 2-15-1z`} fill="#8cb9d0" />
        <path d={i % 2 ? `M4 ${y + 2} 13 ${y}l16 1-9 2z` : `M7 ${y + 2} 16 ${y}l15 1-9 2z`} fill="#e9f6fc" />
        <path d={i % 2 ? `M20 ${y + 3}l9-2v7l-9 2z` : `M22 ${y + 3}l9-2v7l-9 2z`} fill="#c3e0ee" />
      </g>
    ))}
  </Svg>
);
const Word = () => (
  <Svg s={32} vb={32}>
    <path d="M15 5h15v22H15z" fill="#fff" stroke="#2a579a" /><path d="M18 8.500h10M18 11.500h10M18 14.500h10M18 17.500h10M18 20.500h10M18 23.500h10" stroke="#2a579a" strokeWidth="1.200" />
    <path d="M1 4.500 19 1.500v29L1 27.500z" fill="#2a579a" />
    <path d="m4.500 11 2.300 9.500L10 12l3.200 8.500L15.500 11" stroke="#fff" strokeWidth="2" />
  </Svg>
);
const Paint = () => (
  <Svg s={34} vb={34}>
    <path d="M16 8c8-2 14 3 13 11-1 9-8 13-12 12-3-1-1-5-4-6-3 0-6 3-9 0C-1 18 6 10 16 8z" fill="#d7e9f6" stroke="#7aa3c1" />
    <circle cx="7" cy="18" r="2.500" fill="#d8433a" /><circle cx="12" cy="13" r="2.500" fill="#4aa945" /><circle cx="19" cy="11" r="2.400" fill="#f2a62b" /><circle cx="14" cy="20" r="2.600" fill="#35577d" />
    <path d="M19 30 27 9" stroke="#c9701f" strokeWidth="2.800" /><path d="m25 10 1-8 6 1-2 9z" fill="#d7a36e" stroke="#875427" strokeWidth=".6" />
    <path d="m26 12 1-4 2.500 1L28 13z" fill="#dce2e8" />
  </Svg>
);

const tasks = [
  { name: "Windows Explorer", icon: <Explorer />, open: true, stack: 1 },
  { name: "Media Player", icon: <MediaPlayer /> },
  { name: "Launcher", icon: <Orb /> },
  { name: "Display settings", icon: <Laptop />, open: true },
  { name: "Internet Explorer", icon: <Explorer2 /> },
  { name: "HP Updates", icon: <HpIcon />, open: true },
  { name: "Firefox", icon: <Firefox />, open: true, stack: 2 },
  { name: "Chrome", icon: <Chrome /> },
  { name: "Sticky Notes", icon: <Notes />, open: true },
  { name: "Notepad++", icon: <Npp />, open: true },
  { name: "SQL Server", icon: <Servers />, open: true },
  { name: "Word", icon: <Word />, open: true, stack: 2 },
  { name: "Paint", icon: <Paint />, open: true },
];

const openStyle =
  "rounded-[3px] border border-[#c9d0d5b0] bg-[linear-gradient(150deg,#ffffff80_0%,#ffffff38_45%,#ffffff14_50%,#ffffff30_100%)] shadow-[0_0_0_1px_#20262b]";

function Task({ name, icon, open, stack = 0 }) {
  return (
    <div className="flex h-[38px] w-[62px] px-[2px]">
      <button aria-label={name} className={`flex min-w-0 flex-1 items-center justify-center ${open ? openStyle : ""}`}>
        {icon}
      </button>
      {stack > 0 && <span className="my-px w-1 rounded-r-[3px] border-y border-r border-[#c9d0d5b0] bg-[#ffffff30]" />}
      {stack > 1 && <span className="my-px w-1 rounded-r-[3px] border-y border-r border-[#c9d0d590] bg-[#ffffff18]" />}
    </div>
  );
}

function Taskbar() {
  return (
    <footer className="flex h-[41px] shrink-0 items-center border-t border-[#20262c] bg-[#56656f] bg-[linear-gradient(180deg,#ffffff60_0px,#ffffff18_2px,transparent_20px),radial-gradient(ellipse_50px_26px_at_1120px_30px,#2b3338cc,transparent),radial-gradient(ellipse_60px_20px_at_985px_0px,#2f383ecc,transparent),linear-gradient(35deg,transparent_64%,#8d9ca370_68%,transparent_71%,#8d9ca360_75%,#4a4f5280_78%,transparent_84%),linear-gradient(90deg,#20272d_0%,#5c707c_3%,#65737d_12%,#343d45_15%,#6b7f8a_18%,#3b4349_30%,#4a4d50_34%,#2c333a_40%,#333b41_60%,#59646a_66%,#4f5d66_75%,#66777e_85%,#566468_94%,#66767c_100%)]">
      <button aria-label="Start" className="ml-[7px] mr-3">
        <svg width="38" height="38" viewBox="0 0 38 38" aria-hidden="true">
          <defs><radialGradient id="start" cx=".5" cy=".85" r=".8"><stop offset="0" stopColor="#35c8f0" /><stop offset=".45" stopColor="#176ba5" /><stop offset="1" stopColor="#0d3c66" /></radialGradient></defs>
          <circle cx="19" cy="19" r="17.500" fill="url(#start)" stroke="#9fb6c6" />
          <path d="M4 15a15.500 15.500 0 0 1 30 0c-9 5-21 5-30 0z" fill="#fff" opacity=".28" />
          <path d="M11 9.500c3-2 6-2 9-.5L18 17.500c-3-1.500-6-1.500-9 .5z" fill="#f0642a" />
          <path d="M21.500 9.800c3 1.500 5.500 1.200 9-.5L28.500 17.500c-3 1.700-6 1.700-9 .2z" fill="#91c73e" />
          <path d="M8.500 19.500c3-2 6-2 9-.5l-2 8.500c-3-1.500-6-1.500-9 .5z" fill="#4fa6e4" />
          <path d="M19 19.500c3 1.500 6 1.500 9-.3L26 27.500c-3 1.700-6 2-9 .3z" fill="#fcc92e" />
        </svg>
      </button>
      <svg className="mr-2" width="9" height="32" viewBox="0 0 9 32" aria-hidden="true">
        <path d="M1 0v32M4.500 0v32M8 0v32" stroke="#20282e" strokeWidth="1.500" strokeDasharray="1.500 2.500" />
      </svg>
      {tasks.map((t) => (
        <Task key={t.name} {...t} />
      ))}
      <div className="ml-auto flex h-full items-center text-white">
        <svg width="33" height="33" viewBox="0 0 33 33" aria-hidden="true">
          <circle cx="13.500" cy="20" r="12" fill="#092457" stroke="#1d70b8" strokeWidth="2" />
          <path d="M9 17c0-6 9-6 9-1 0 3-4.500 3-4.500 7M13.500 25.500v3" stroke="#fff" strokeWidth="3" fill="none" />
          <circle cx="23.500" cy="9.500" r="8.800" fill="#e9ac10" stroke="#b98209" />
          <path d="M23.500 3.500v7.500M23.500 13v2.800" stroke="#fff" strokeWidth="3" />
        </svg>
        <svg className="ml-[13px]" width="8" height="5" viewBox="0 0 8 5" aria-hidden="true"><path d="M4 0 8 4.500H0z" fill="#fff" /></svg>
        <svg className="ml-[13px]" width="16" height="14" viewBox="0 0 16 14" aria-hidden="true">
          <path d="M1.500 10.500V13M4.500 8.500V13M7.500 6.500V13M10.500 4V13M13.500 1V13" stroke="#fff" strokeWidth="2" />
        </svg>
        <svg className="ml-[8px]" width="16" height="14" viewBox="0 0 16 14" aria-hidden="true">
          <path d="M1 4.500h2.500L7 1v12L3.500 9.500H1z" fill="#fff" />
          <path d="M9 5c1 1 1 3 0 4M11 3.500c2 2 2 5 0 7M13 2c2.500 3 2.500 7 0 10" stroke="#fff" strokeWidth="1.200" fill="none" />
        </svg>
        <svg className="ml-[11px]" width="10" height="16" viewBox="0 0 10 16" aria-hidden="true">
          <path d="M3.500.5h3v2h-3z" fill="#fff" /><rect x="1" y="2.500" width="8" height="12.500" rx="1" fill="none" stroke="#fff" strokeWidth="1.400" />
          <path d="M3 9h4v4.500H3z" fill="#fff" />
        </svg>
        <div className="ml-[9px] mr-px w-[70px] pt-px text-center text-[12px] leading-[17px]">
          <p>1:14 PM</p>
          <p>12/8/2014</p>
        </div>
        <button aria-label="Show desktop" className="h-full w-[14px] border border-[#a9b5bc] bg-[linear-gradient(135deg,#ffffff60,#ffffff10)]" />
      </div>
    </footer>
  );
}

export default function App() {
  return (
    <div className="flex h-screen flex-col overflow-hidden font-['Open_Sans','Noto_Sans',sans-serif]">
      <TitleArea />
      <NavBar />
      <DevToolbar />
      <div className="flex min-h-0 flex-1">
        <Page />
        <VerticalScroll />
      </div>
      <HorizontalScroll />
      <Taskbar />
    </div>
  );
}
